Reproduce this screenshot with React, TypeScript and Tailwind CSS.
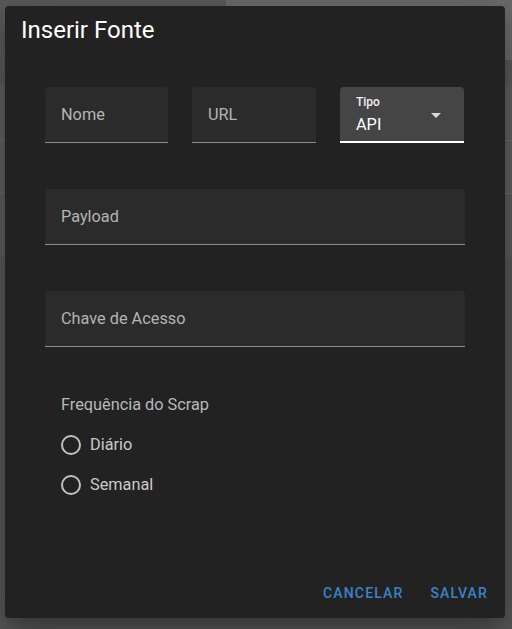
import React from 'react';

function FilledField({ label, className = '' }: { label: string; className?: string }) {
  return (
    <div className={`relative h-[56px] rounded-t-[4px] bg-[#2b2b2b] border-b border-[#8c8c8c] ${className}`}>
      <span className="absolute left-4 top-[16px] text-[16.3px] leading-[24px] text-[#b4b4b4]">{label}</span>
    </div>
  );
}

function SelectField() {
  return (
    <div className="relative w-[124px] h-[56px] rounded-t-[4px] bg-[#454545] border-b-2 border-white">
      <span className="absolute left-4 top-[7px] text-[12px] leading-[16px] font-medium text-[#f0f0f0]">Tipo</span>
      <span className="absolute left-4 top-[26px] text-[16.3px] leading-[24px] text-white">API</span>
      <svg className="absolute right-[16px] top-[16px]" width="24" height="24" viewBox="0 0 24 24" fill="#d8d8d8">
        <path d="M7 10l5 5 5-5z" />
      </svg>
    </div>
  );
}

function RadioOption({ label }: { label: string }) {
  return (
    <label className="flex items-center h-[40px]">
      <svg width="24" height="24" viewBox="0 0 24 24" className="ml-[-2px]">
        <circle cx="12" cy="12" r="9" fill="none" stroke="#c2c2c2" strokeWidth="2" />
      </svg>
      <span className="ml-[7px] text-[16.3px] text-[#cacaca]">{label}</span>
    </label>
  );
}

export default function App() {
  return (
    <div className="relative w-[512px] h-[629px] overflow-hidden bg-[#575757]" style={{ fontFamily: 'Roboto, "Liberation Sans", sans-serif' }}>
      {/* page behind the overlay */}
      <div className="flex h-[60px]">
        <div className="w-[226px] bg-[#595959]" />
        <div className="flex-1 bg-[#6a6a6a]" />
      </div>
      <div className="h-[25px] bg-[#595959]" />
      <div className="h-[56px] bg-[#5f5f5f] border-b border-[#6c6c6c]" />
      <div className="h-[53px] bg-[#5f5f5f] border-b border-[#6c6c6c]" />
      <div className="h-[63px] bg-[#5c5c5c]" />

      {/* dialog */}
      <div className="absolute left-[5px] top-[6px] w-[500px] h-[612px] rounded-[4px] bg-[#222222] shadow-[0_11px_15px_-7px_rgba(0,0,0,0.2),0_24px_38px_3px_rgba(0,0,0,0.14),0_9px_46px_8px_rgba(0,0,0,0.12)] flex flex-col">
        <h2 className="px-4 pt-[10px] text-[24px] leading-[28px] font-normal text-white">Inserir Fonte</h2>

        <div className="px-10 pt-[43px] flex flex-col">
          <div className="flex gap-6">
            <FilledField label="Nome" className="w-[123px]" />
            <FilledField label="URL" className="w-[124px]" />
            <SelectField />
          </div>
          <FilledField label="Payload" className="mt-[46px]" />
          <FilledField label="Chave de Acesso" className="mt-[46px]" />

          <div className="mt-[46px] pl-4">
            <div className="text-[16.3px] leading-[24px] text-[#b8b8b8]">Frequência do Scrap</div>
            <div className="mt-[8px] flex flex-col">
              <RadioOption label="Diário" />
              <RadioOption label="Semanal" />
            </div>
          </div>
        </div>

        <div className="mt-auto flex justify-end gap-[27px] pr-[17px] pb-[17px]">
          <button className="text-[14px] leading-[16px] font-medium tracking-[1.15px] text-[#3b82c9]">CANCELAR</button>
          <button className="text-[14px] leading-[16px] font-medium tracking-[1.15px] text-[#3b82c9]">SALVAR</button>
        </div>
      </div>
    </div>
  );
}
